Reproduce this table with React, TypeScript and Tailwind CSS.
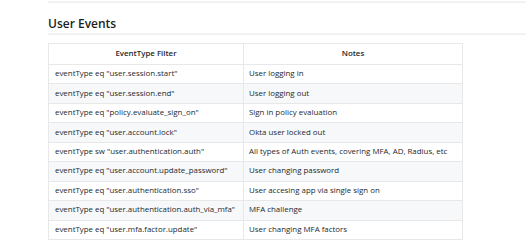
import React from 'react';

const rows: [string, string][] = [
  ['eventType eq "user.session.start"', 'User logging in'],
  ['eventType eq "user.session.end"', 'User logging out'],
  ['eventType eq "policy.evaluate_sign_on"', 'Sign in policy evaluation'],
  ['eventType eq "user.account.lock"', 'Okta user locked out'],
  ['eventType sw "user.authentication.auth"', 'All types of Auth events, covering MFA, AD, Radius, etc'],
  ['eventType eq "user.account.update_password"', 'User changing password'],
  ['eventType eq "user.authentication.sso"', 'User accesing app via single sign on'],
  ['eventType eq "user.authentication.auth_via_mfa"', 'MFA challenge'],
  ['eventType eq "user.mfa.factor.update"', 'User changing MFA factors'],
];

export default function App() {
  return (
    <div className="w-[526px] h-[243px] overflow-hidden bg-white pl-[48px] font-['Open_Sans',sans-serif] text-[#24292e]">
      <div className="h-[2px] mt-[1px] bg-[#f2f2f2]" />
      {/* Section heading */}
      <h2 className="mt-[12px] h-[20px] border-b-[2px] border-[#f2f2f2] text-[12px] font-semibold leading-[17px] text-[#1b1f23]">
        User Events
      </h2>
      <table className="mt-[8px] w-[414px] table-fixed border-collapse text-[7.9px] leading-none">
        <colgroup>
          <col className="w-[195px]" />
          <col className="w-[219px]" />
        </colgroup>
        <thead>
          <tr className="h-[21px]">
            <th className="border border-[#e8e8e8] font-semibold">EventType Filter</th>
            <th className="border border-[#e8e8e8] font-semibold">Notes</th>
          </tr>
        </thead>
        <tbody>
          {rows.map(([filter, note], i) => (
            <tr key={filter} className={`h-[19.45px] ${i % 2 === 1 ? 'bg-[#f6f8fa]' : 'bg-white'}`}>
              <td className="border border-[#e8e8e8] px-[6px] whitespace-nowrap">{filter}</td>
              <td className="border border-[#e8e8e8] px-[5px] whitespace-nowrap">{note}</td>
            </tr>
          ))}
        </tbody>
      </table>
    </div>
  );
}
